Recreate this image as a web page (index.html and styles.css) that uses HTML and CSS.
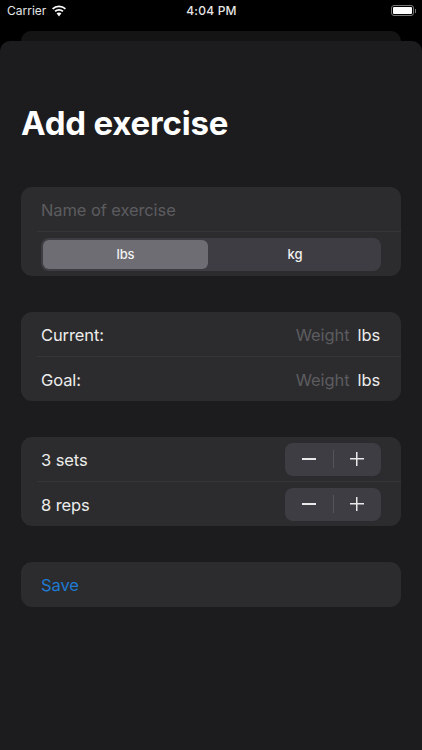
FILE: index.html
```html
<!DOCTYPE html>
<html lang="en">
<head>
    <meta charset="UTF-8">
    <link rel="stylesheet" href="styles.css">
    <meta name="viewport" content="width=device-width, initial-scale=1.0">
    <title>Add exercise</title>
</head>
<body>
    <div class="status">
        <div class="status-left">
            <span>Carrier</span>
            <svg class="wifi" width="16" height="12" viewBox="0 0 16 12">
                <path d="M8 2.3c2.2 0 4.2.85 5.7 2.25l1.3-1.3A10.2 10.2 0 0 0 8 .4a10.2 10.2 0 0 0-7 2.85l1.3 1.3A8.3 8.3 0 0 1 8 2.3z" fill="#fff"/>
                <path d="M8 5.8c1.25 0 2.4.46 3.25 1.22l1.3-1.3A6.5 6.5 0 0 0 8 3.9a6.5 6.5 0 0 0-4.55 1.82l1.3 1.3A4.8 4.8 0 0 1 8 5.8z" fill="#fff"/>
                <path d="M8 7.4c-.95 0-1.8.36-2.45.95L8 11.4l2.45-3.05A3.6 3.6 0 0 0 8 7.4z" fill="#fff"/>
            </svg>
        </div>
        <div class="status-time">4:04 PM</div>
        <div class="status-right">
            <div class="battery"><div class="battery-fill"></div></div>
            <div class="battery-tip"></div>
        </div>
    </div>
    <div class="back-card"></div>
    <div class="sheet">
        <h1 class="title">Add exercise</h1>

        <div class="card">
            <div class="row placeholder">Name of exercise</div>
            <div class="row row-segment">
                <div class="segment">
                    <div class="segment-item selected">lbs</div>
                    <div class="segment-item">kg</div>
                </div>
            </div>
        </div>

        <div class="card">
            <div class="row">
                <span>Current:</span>
                <span class="value"><span class="placeholder">Weight</span><span>lbs</span></span>
            </div>
            <div class="row">
                <span>Goal:</span>
                <span class="value"><span class="placeholder">Weight</span><span>lbs</span></span>
            </div>
        </div>

        <div class="card">
            <div class="row">
                <span>3 sets</span>
                <div class="stepper">
                    <div class="step step-left"><div class="minus"></div></div>
                    <div class="step-line"></div>
                    <div class="step"><div class="plus"></div></div>
                </div>
            </div>
            <div class="row">
                <span>8 reps</span>
                <div class="stepper">
                    <div class="step step-left"><div class="minus"></div></div>
                    <div class="step-line"></div>
                    <div class="step"><div class="plus"></div></div>
                </div>
            </div>
        </div>

        <div class="card">
            <div class="row save">Save</div>
        </div>
    </div>
</body>
</html>
```

FILE: styles.css
```css
html, body {
  margin: 0;
  height: 100%;
}
body {
  width: 422px;
  height: 750px;
  overflow: hidden;
  background: #000;
  color: #fff;
  font-family: Inter, "Liberation Sans", sans-serif;
}
.status {
  height: 20px;
  box-sizing: border-box;
  padding: 1px 6px 0 7px;
  display: grid;
  grid-template-columns: 1fr auto 1fr;
  align-items: center;
  font-size: 12px;
  color: #e6e6e6;
}
.status-left {
  display: flex;
  align-items: center;
  gap: 5px;
}
.status-time {
  font-weight: 500;
  letter-spacing: 0.2px;
}
.status-right {
  display: flex;
  justify-content: flex-end;
  align-items: center;
  gap: 1px;
}
.battery {
  width: 19px;
  height: 7px;
  border: 1px solid #777;
  border-radius: 3px;
  padding: 1px;
  box-sizing: content-box;
}
.battery-fill {
  height: 100%;
  background: #fff;
  border-radius: 1px;
}
.battery-tip {
  width: 1px;
  height: 4px;
  background: #777;
}
.back-card {
  height: 21px;
  margin: 11px 21px 0 21px;
  background: #141415;
  border-radius: 10px 10px 0 0;
}
.sheet {
  height: 709px;
  margin-top: -11px;
  position: relative;
  background: #1c1c1e;
  border-radius: 10px 10px 0 0;
  padding: 0 21px;
  box-sizing: border-box;
}
.title {
  margin: 0;
  padding-top: 60px;
  height: 146px;
  box-sizing: border-box;
  font-size: 33px;
  line-height: 44px;
  font-weight: 700;
  letter-spacing: -0.2px;
}
.card {
  background: #2c2c2e;
  border-radius: 11px;
  margin-bottom: 36px;
  overflow: hidden;
}
.row {
  height: 45px;
  box-sizing: border-box;
  margin-left: 16px;
  padding: 1px 20px 0 4px;
  display: flex;
  justify-content: space-between;
  align-items: center;
  font-size: 16.5px;
  letter-spacing: -0.1px;
  color: #ececec;
  border-bottom: 1px solid #353537;
}
.row:last-child {
  border-bottom: none;
  height: 44px;
}
.row.save {
  height: 45px;
}
.placeholder {
  color: #5c5c60;
}
.value {
  display: flex;
  gap: 8px;
  padding-right: 1px;
}
.row-segment {
  padding-top: 0;
}
.segment {
  width: 340px;
  height: 33px;
  box-sizing: border-box;
  padding: 2px;
  display: flex;
  background: #3e3d44;
  border-radius: 8px;
}
.segment-item {
  flex: 1;
  padding-left: 3px;
  display: flex;
  justify-content: center;
  align-items: center;
  font-size: 13px;
  font-weight: 500;
  border-radius: 6px;
  color: #f2f2f2;
}
.segment-item.selected {
  flex: none;
  width: 165px;
  padding-left: 0;
  background: #6e6d74;
}
.stepper {
  width: 96px;
  height: 33px;
  margin-top: -1px;
  display: flex;
  align-items: center;
  background: #3e3d44;
  border-radius: 8px;
}
.step {
  flex: 1;
  height: 100%;
  display: flex;
  justify-content: center;
  align-items: center;
}
.step-left {
  flex: none;
  width: 48px;
}
.step-line {
  width: 1px;
  height: 18px;
  background: #55545b;
}
.minus {
  width: 14px;
  height: 1.5px;
  background: #e8e8e8;
}
.plus {
  width: 14px;
  height: 14px;
  margin-right: 1px;
  background:
    linear-gradient(#e8e8e8, #e8e8e8) center / 14px 1.5px no-repeat,
    linear-gradient(#e8e8e8, #e8e8e8) center / 1.5px 14px no-repeat;
}
.save {
  color: #1f7ad1;
}
```
